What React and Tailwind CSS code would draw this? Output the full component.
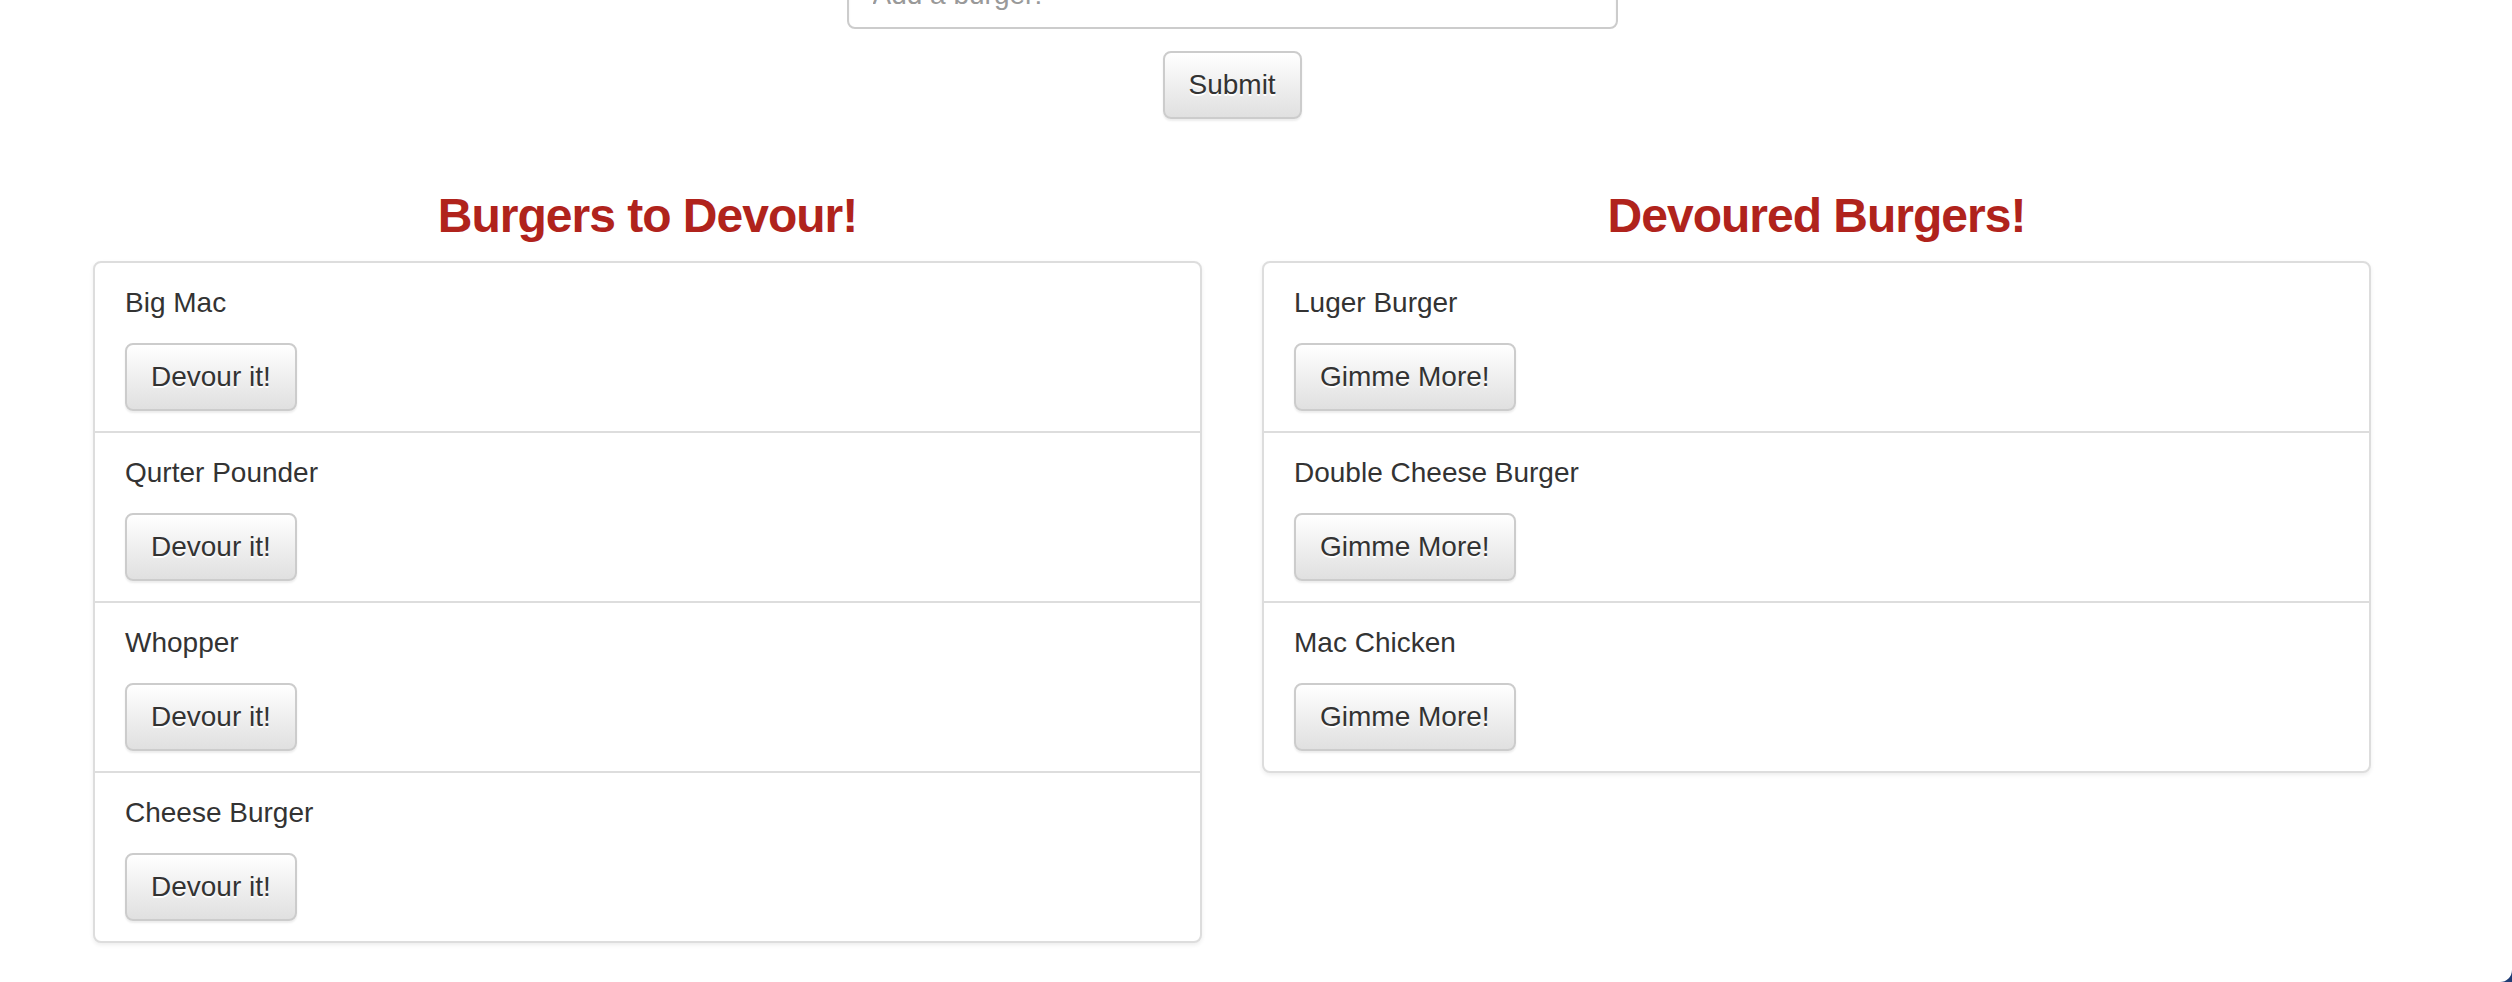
import React from 'react';

const toDevour = ['Big Mac', 'Qurter Pounder', 'Whopper', 'Cheese Burger'];
const devoured = ['Luger Burger', 'Double Cheese Burger', 'Mac Chicken'];

const btnClass =
  "h-[68px] px-[24px] rounded-[8px] border-2 border-[#cccccc] bg-linear-to-b from-white to-[#e0e0e0] text-[28px] leading-[40px] text-[#333] text-shadow-[0_2px_0_#fff] shadow-[inset_0_2px_0_rgba(255,255,255,0.15),0_2px_2px_rgba(0,0,0,0.075)]";

const BurgerList = ({ title, items, action }) => {
  return (
    <div className="flex flex-col">
      <h3 className="text-center text-[48px] leading-[53px] tracking-[-1px] font-bold text-[#b0231c] mb-[19px]">
        {title}
      </h3>
      <ul className="border-2 border-[#dddddd] rounded-[8px] bg-white shadow-[0_2px_4px_rgba(0,0,0,0.075)]">
        {items.map((name, i) => (
          <li
            key={name}
            className={`px-[30px] pt-[20px] pb-[20px] ${i > 0 ? 'border-t-2 border-[#dddddd]' : ''}`}
          >
            <p className="text-[28px] leading-[40px] text-[#333] mb-[20px]">{name}</p>
            <button className={btnClass}>{action}</button>
          </li>
        ))}
      </ul>
    </div>
  );
};

const App = () => {
  return (
    <div className="relative w-[2512px] h-[982px] overflow-hidden bg-white font-['Liberation_Sans',Arial,sans-serif]">
      <div className="w-[2464px]">
        <form className="flex flex-col items-center" onSubmit={(e) => e.preventDefault()}>
          <input
            type="text"
            placeholder="Add a burger!"
            className="-mt-[39px] w-[771px] h-[68px] px-[24px] rounded-[8px] border-2 border-[#cccccc] text-[28px] text-[#555] placeholder:text-[#999] shadow-[inset_0_2px_2px_rgba(0,0,0,0.075)] outline-none"
          />
          <button type="submit" className={`mt-[22px] w-[139px] px-0 ${btnClass}`}>
            Submit
          </button>
        </form>

        <div className="grid grid-cols-2 gap-[60px] px-[93px] mt-[70px]">
          <BurgerList title="Burgers to Devour!" items={toDevour} action="Devour it!" />
          <div className="self-start">
            <BurgerList title="Devoured Burgers!" items={devoured} action="Gimme More!" />
          </div>
        </div>
      </div>

      <div className="absolute bottom-0 right-0 w-[12px] h-[12px] bg-[#1f3c74]">
        <div className="w-full h-full bg-white rounded-br-[12px]" />
      </div>
    </div>
  );
};

export default App;
